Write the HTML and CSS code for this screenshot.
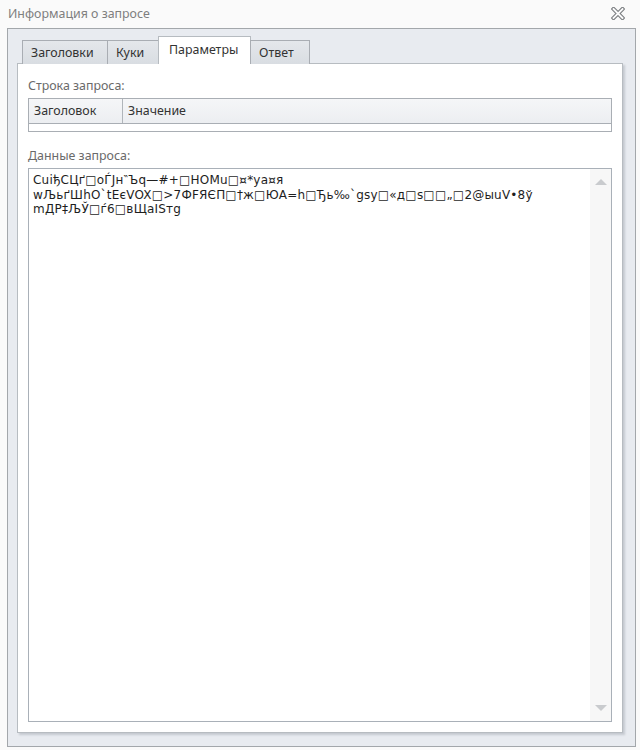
FILE: index.html
```html
<!DOCTYPE html>
<html lang="ru">
<head>
    <meta charset="UTF-8">
    <title>Информация о запросе</title>
    <link rel="stylesheet" href="styles.css">
</head>
<body>
    <div class="window">
        <div class="titlebar">
            <span class="title">Информация о запросе</span>
            <svg class="close" width="14" height="13" viewBox="0 0 14 13">
                <path d="M2.5 2 L11.5 11 M11.5 2 L2.5 11" stroke="#7a7d80" stroke-width="4" stroke-linecap="square"/>
                <path d="M2.5 2 L11.5 11 M11.5 2 L2.5 11" stroke="#fbfbfb" stroke-width="1.8" stroke-linecap="square"/>
            </svg>
        </div>
        <div class="frame">
            <div class="tabs">
                <div class="tab">Заголовки</div>
                <div class="tab">Куки</div>
                <div class="tab active">Параметры</div>
                <div class="tab">Ответ</div>
            </div>
            <div class="page">
                <div class="label first">Строка запроса:</div>
                <div class="grid">
                    <div class="grid-head">
                        <div class="col col-name">Заголовок</div>
                        <div class="col col-value">Значение</div>
                    </div>
                    <div class="grid-row"></div>
                </div>
                <div class="label">Данные запроса:</div>
                <div class="memo">
                    <div class="memo-text">CuiђСЦґ□оЃЈн‶Ъq—#+□НОМu□¤*уа¤я
wЉьґШhO`tEєVOX□&gt;7ФFЯЄП□†ж□ЮА=h□Ђь‰`gsy□«д□s□□„□2@ыuV•8ў
mДР‡ЉЎ□ѓ6□вЩaIЅтg</div>
                    <div class="scroll">
                        <span class="arrow up"></span>
                        <span class="arrow down"></span>
                    </div>
                </div>
            </div>
        </div>
    </div>
</body>
</html>
```

FILE: styles.css
```css
body {
    margin: 0;
    background: #fafafa;
    font-family: "Noto Sans", "Open Sans", sans-serif;
    font-size: 12.4px;
    color: #333;
}
.window {
    height: 750px;
    display: flex;
    flex-direction: column;
    box-sizing: border-box;
    padding: 0 4px 3px 7px;
}
.titlebar {
    height: 28px;
    display: flex;
    align-items: center;
    justify-content: space-between;
    margin-left: 1px;
    padding-right: 11px;
}
.title {
    color: #7f7f7f;
    margin-top: -2px;
}
.close {
    margin-top: -2px;
}
.frame {
    flex: 1;
    display: flex;
    flex-direction: column;
    border: 1px solid #a3a7ab;
    background: #e8ebf0;
    padding: 8px 12px 13px 9px;
}
.tabs {
    display: flex;
    align-items: flex-end;
    padding-left: 5px;
    height: 27px;
    margin-bottom: -1px;
    position: relative;
    z-index: 1;
}
.tab {
    height: 24px;
    line-height: 23px;
    box-sizing: border-box;
    padding: 0 8px;
    border: 1px solid #a9adb3;
    border-bottom: none;
    background: linear-gradient(#e4e7eb, #d9dde2);
    margin-right: -1px;
    color: #333;
}
.tab:nth-child(1) { width: 86px; }
.tab:nth-child(2) { width: 52px; }
.tab:nth-child(3) { width: 93px; }
.tab:nth-child(4) { width: 60px; }
.tab.active {
    height: 28px;
    line-height: 25px;
    background: #fff;
    border-color: #b6bbc0;
    padding-left: 10px;
    color: #333;
}
.page {
    flex: 1;
    display: flex;
    flex-direction: column;
    background: #fff;
    border: 1px solid #b7bcc1;
    box-shadow: 2px 2px 2px rgba(90, 100, 110, 0.25);
    padding: 0 10px 10px 10px;
}
.label {
    color: #6a6a6a;
    height: 20px;
    line-height: 20px;
    margin-top: 12px;
}
.label.first {
    margin-top: 12px;
    margin-bottom: 2px;
}
.grid {
    border: 1px solid #a9aeb4;
    margin-bottom: 2px;
}
.grid-head {
    display: flex;
    height: 24px;
    background: linear-gradient(#f5f6f8, #eceef1);
    border-bottom: 1px solid #a9aeb4;
}
.col {
    line-height: 24px;
    padding-left: 5px;
    color: #333;
}
.col-name {
    width: 88px;
    border-right: 1px solid #b0b5ba;
}
.col-value {
    flex: 1;
}
.grid-row {
    height: 7px;
}
.memo {
    flex: 1;
    display: flex;
    border: 1px solid #a9b0b8;
    margin-top: 2px;
}
.memo-text {
    flex: 1;
    white-space: pre;
    padding: 4px 4px;
    font-family: "DejaVu Sans", sans-serif;
    font-size: 12px;
    letter-spacing: 0.2px;
    line-height: 14.5px;
    color: #1e1e1e;
}
.scroll {
    width: 21px;
    background: #f7f7f7;
    display: flex;
    flex-direction: column;
    justify-content: space-between;
    align-items: center;
    padding: 10px 0;
}
.arrow {
    width: 0;
    height: 0;
    border-left: 6px solid transparent;
    border-right: 6px solid transparent;
}
.arrow.up {
    border-bottom: 6px solid #c9cbce;
}
.arrow.down {
    border-top: 6px solid #c9cbce;
}
```
